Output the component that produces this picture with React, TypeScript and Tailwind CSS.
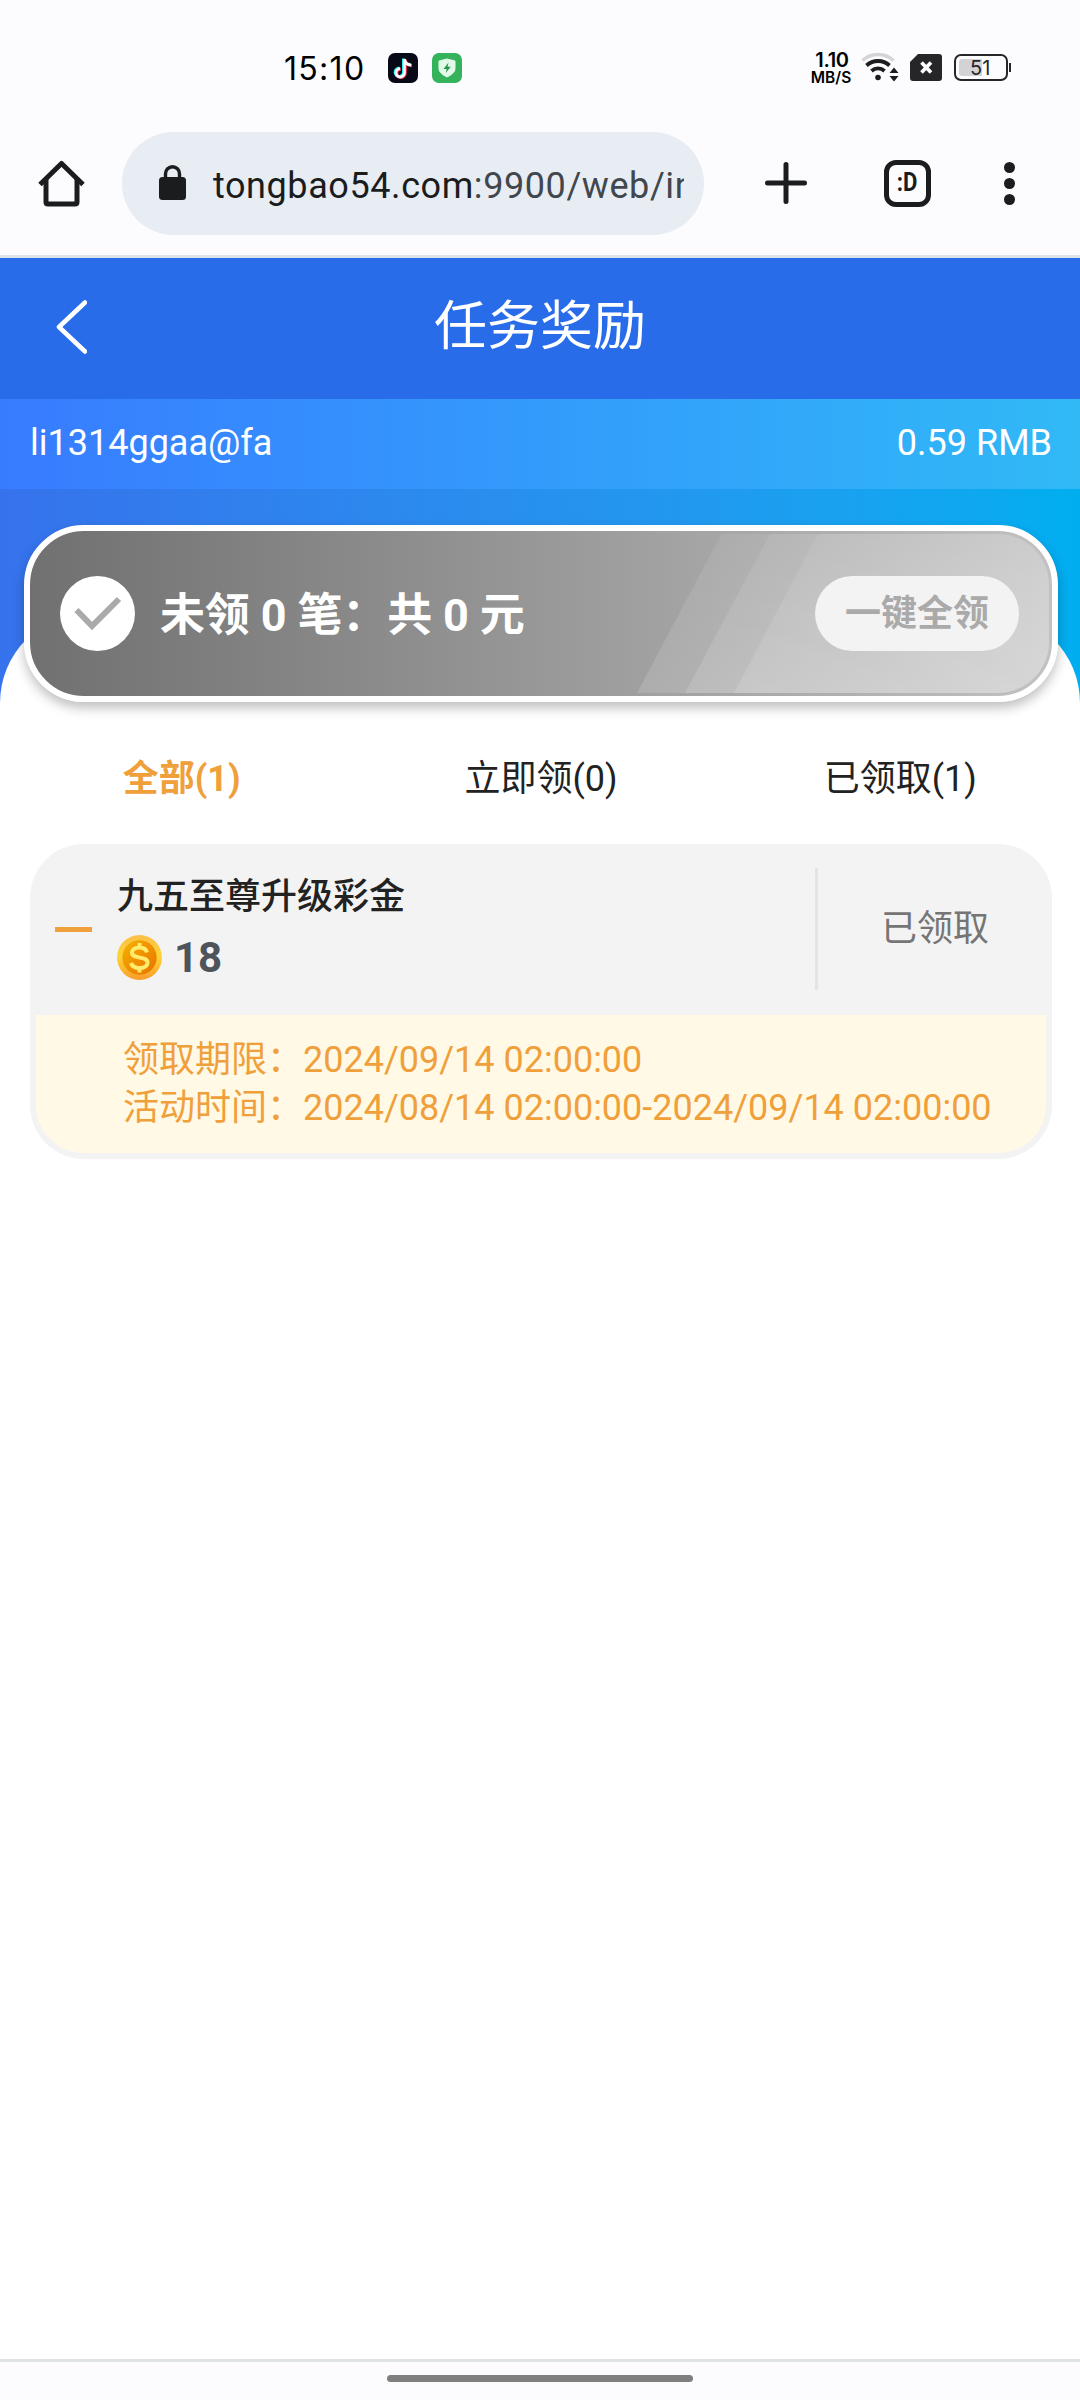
import type { ReactNode } from "react";

const tabs = [
  { label: "全部(1)", active: true },
  { label: "立即领(0)", active: false },
  { label: "已领取(1)", active: false },
];

const StatusBar = () => (
  <div className="flex h-[132px] items-start pt-[52px] pl-[284px] pr-[69px] font-['Inter',sans-serif] text-black">
    <span className="mt-px w-[104px] text-[32px] leading-8 tracking-[1.3px] whitespace-nowrap">15:10</span>
    <svg className="mt-px size-[30px]" viewBox="0 0 30 30">
      <rect width="30" height="30" rx="7" fill="#080916" />
      <g fill="none" strokeWidth="3.2">
        <path d="M15.6 5.5V19.5A4.2 4.2 0 1 1 11.4 15.1M15.6 6C16.2 9.4 18.8 11.4 22.4 11.6" stroke="#25f4ee" />
        <path d="M17.2 6.5V20.3A4.2 4.2 0 1 1 12.8 16.1M17.2 7C17.8 10.4 20.4 12.4 24 12.6" stroke="#fe2c55" />
        <path d="M16.4 6V19.9A4.2 4.2 0 1 1 12.1 15.6M16.4 6.5C17 9.9 19.6 11.9 23.2 12.1" stroke="#fff" strokeWidth="2.8" />
      </g>
    </svg>
    <svg className="mt-px ml-3.5 size-[30px]" viewBox="0 0 30 30">
      <rect width="30" height="30" rx="7" fill="#35b35b" />
      <path d="M15 6 23 8v7.500c0 4-4 6.500-8 8.500-4-2-8-4.500-8-8.500V8Z" fill="#e3faea" stroke="#e3faea" strokeLinejoin="round" />
      <path d="M16.500 9.500 11.500 16h3.200l-.9 4 4.900-6.300h-3.200Z" fill="#24984a" />
    </svg>
    <div className="ml-auto flex w-[40px] flex-col items-center font-semibold">
      <span className="text-[20px] leading-[17px] tracking-[-0.3px]">1.10</span>
      <span className="mt-px -ml-0.5 text-[15.500px] leading-4">MB/S</span>
    </div>
    <svg className="ml-2 h-[30px] w-[40px]" viewBox="0 0 40 30" fill="none" strokeWidth="3.600">
      <path d="M2.500 8.500a23 23 0 0 1 31 0" stroke="#d4d4d6" />
      <path d="M6.500 13.500a17 17 0 0 1 23 0M11.500 19a9.600 9.600 0 0 1 13 0" stroke="#1d1d20" strokeWidth="3.800" />
      <circle cx="18" cy="25.500" r="2.800" fill="#1d1d20" />
      <path d="M29.500 21h9L34 15.500ZM29.500 24h9L34 29.500Z" fill="#1d1d20" />
    </svg>
    <svg className="mt-0.5 ml-2.5 h-[27px] w-8" viewBox="0 0 32 27">
      <path d="M8 0h21a3 3 0 0 1 3 3v21a3 3 0 0 1-3 3H3a3 3 0 0 1-3-3V8Z" fill="#262629" />
      <path d="m11.500 8.500 9.500 10M21 8.500l-9.500 10" stroke="#fff" strokeWidth="3.600" />
    </svg>
    <div className="mt-0.5 ml-3 flex h-[27px] w-[54px] shrink-0 rounded-[7px] border-2 border-[#262629] p-[3px]">
      <div className="relative h-full w-[23px] rounded-l-[3px] bg-[#d3d3d6]">
        <span className="absolute top-0 left-[11px] text-[20px] leading-[18px] text-[#262629]">51</span>
      </div>
    </div>
    <div className="mt-[11px] ml-px h-[9px] w-0.5 shrink-0 bg-[#262629]" />
  </div>
);

const BrowserBar = () => (
  <div className="flex h-[123px] text-[#1a1c1e]">
    <svg className="mt-[28px] ml-[38px] h-[47px] w-[47px]" viewBox="0 0 47 47" fill="none" stroke="currentColor" strokeWidth="5">
      <path d="M2 24.500 23.500 3.500 45 24.500" strokeLinejoin="round" />
      <path d="M8 19v23q0 2 2 2h27q2 0 2-2V19" />
    </svg>
    <div className="ml-[37px] flex h-[103px] w-[582px] rounded-full bg-[#e7edf3] pr-5 pl-[37px]">
      <svg className="mt-[33px] h-[35px] w-[27px]" viewBox="0 0 27 35">
        <path d="M6.500 13V8.700a7 7 0 0 1 14 0V13" fill="none" stroke="currentColor" strokeWidth="3.400" />
        <rect y="12" width="27" height="23" rx="3.500" fill="currentColor" />
      </svg>
      <div className="ml-[27px] w-[471px] overflow-hidden pt-[29px] text-[36px] leading-[50px] tracking-[0.580px] whitespace-nowrap">
        tongbao54.com<span className="text-[#42474d]">:9900/web/in</span>
      </div>
    </div>
    <svg className="mt-[30px] ml-[61px] size-[42px]" viewBox="0 0 42 42" stroke="currentColor" strokeWidth="5" strokeLinecap="round">
      <path d="M21 2.500v37M2.500 21h37" />
    </svg>
    <div className="mt-[28px] ml-[77px] flex h-[47px] w-[47px] justify-center rounded-[12px] border-[5px] border-current">
      <span className="scale-x-85 text-[26px] leading-[35px] font-bold">:D</span>
    </div>
    <div className="mt-[30px] ml-[73px] flex h-[43px] w-[11px] flex-col justify-between">
      <i className="size-[11px] rounded-full bg-current" />
      <i className="size-[11px] rounded-full bg-current" />
      <i className="size-[11px] rounded-full bg-current" />
    </div>
  </div>
);

const Coin = () => (
  <svg className="size-[45px]" viewBox="0 0 45 45">
    <defs>
      <linearGradient id="rim" x1="0" y1="0" x2="0" y2="1">
        <stop offset="0" stopColor="#fbc04a" />
        <stop offset=".5" stopColor="#fdd435" />
        <stop offset="1" stopColor="#fb9a2c" />
      </linearGradient>
      <linearGradient id="face" x1="0" y1="0" x2="1" y2="1">
        <stop offset="0" stopColor="#f5b400" />
        <stop offset=".5" stopColor="#f09000" />
        <stop offset="1" stopColor="#e87400" />
      </linearGradient>
    </defs>
    <circle cx="22.500" cy="22.500" r="22.500" fill="url(#rim)" />
    <circle cx="22.500" cy="22.500" r="17.200" fill="url(#face)" />
    <path d="M30 17.500c-1-3.500-4-5-7.500-5-4.200 0-7.500 2-7.500 5.300 0 6.700 15.500 3 15.500 9.700 0 3.300-3.300 5.500-8 5.500-4.500 0-7.500-2-8.500-5M22.500 8v4M22.500 33v4.500" fill="none" stroke="#ffec6e" strokeWidth="4" />
  </svg>
);

const Summary = () => (
  <div className="relative flex h-[177px] items-center overflow-hidden rounded-[60px] border-[6px] border-white bg-linear-to-r from-[#707070] to-[#c2c2c2] bg-origin-border pr-[33px] pl-[30px] text-white">
    {/* glossy slanted stripes on the right side */}
    <svg className="absolute inset-0 size-full" viewBox="0 0 1022 165">
      <defs>
        <linearGradient id="gloss" x1="0" y1="0" x2="0" y2="1">
          <stop offset="0" stopColor="#fff" stopOpacity=".07" />
          <stop offset="1" stopColor="#fff" stopOpacity=".14" />
        </linearGradient>
      </defs>
      <path d="M691.500 3H968a51 51 0 0 1 51 51V111a51 51 0 0 1-51 51H607Z" fill="url(#gloss)" />
      <path d="M740 3H968a51 51 0 0 1 51 51V111a51 51 0 0 1-51 51H655Z" fill="url(#gloss)" />
      <path d="M788 3H968a51 51 0 0 1 51 51V111a51 51 0 0 1-51 51H704Z" fill="url(#gloss)" />
    </svg>
    <svg className="relative size-[75px]" viewBox="0 0 75 75">
      <circle cx="37.500" cy="37.500" r="37.500" fill="#fff" />
      <path d="m16.500 34 15.500 16 27-27" fill="none" stroke="#aaa" strokeWidth="6" />
    </svg>
    <p className="relative top-0.5 ml-[25px] text-[45px] leading-[60px] font-bold tracking-[-0.15px] whitespace-nowrap">未领 0 笔：共 0 元</p>
    <button className="relative ml-auto h-[75px] w-[204px] rounded-full bg-[#f3f3f3] text-[36px] font-bold text-[#aaa]">一键全领</button>
  </div>
);

const Detail = ({ children }: { children: ReactNode }) => (
  <p className="h-12 text-[36px] leading-12 whitespace-nowrap">{children}</p>
);

const TaskCard = () => (
  <div className="mr-[28px] ml-[30px] h-[315px] rounded-[54px] bg-[#f3f3f3] p-[6px]">
    <div className="flex h-[165px]">
      <div className="mt-[77px] ml-[19px] h-[5px] w-[37px] bg-[#f0a03a]" />
      <div className="ml-[25px] w-[698px] pt-5">
        <h2 className="h-[54px] text-[36px] leading-[54px] font-medium text-[#222]">九五至尊升级彩金</h2>
        <div className="mt-[11px] flex items-center">
          <Coin />
          <span className="ml-3 text-[42px] leading-[43px] font-bold text-[#4f535c]">18</span>
        </div>
      </div>
      <div className="mt-[18px] h-[122px] w-[3px] bg-[#e4e4e4]" />
      <div className="flex-1 pt-[52px] pl-[6px] text-center text-[36px] leading-[54px] text-[#757575]">已领取</div>
    </div>
    <div className="h-[138px] rounded-b-[48px] bg-[#fff9e6] pt-[21px] pl-[87px] text-[#f0a03a]">
      <Detail>领取期限：2024/09/14 02:00:00</Detail>
      <Detail>活动时间：2024/08/14 02:00:00-2024/09/14 02:00:00</Detail>
    </div>
  </div>
);

const App = () => {
  return (
    <div className="flex h-[2400px] w-[1080px] flex-col overflow-hidden bg-[#fcfcfe] font-['Roboto','Noto_Sans_CJK_SC',sans-serif]">
      <StatusBar />
      <BrowserBar />
      <header className="flex h-[144px] items-center border-t-[3px] border-[#dde3ea] bg-[#286cea] text-white">
        <svg className="mt-[-3px] ml-[56px] h-[54px] w-[31px]" viewBox="0 0 31 54" fill="none" stroke="currentColor" strokeWidth="4.500" strokeLinecap="round" strokeLinejoin="round">
          <path d="M29 2.500 3 27l26 24.500" />
        </svg>
        <h1 className="mt-[-3px] mr-[87px] flex-1 text-center text-[53px] leading-[80px]">任务奖励</h1>
      </header>
      <div className="flex h-[90px] items-center justify-between bg-linear-to-r from-[#387bff] to-[#31b9f6] pr-[28px] pb-0.5 pl-[30px] text-[36px] text-white">
        <span>li1314ggaa@fa</span>
        <span>0.59 RMB</span>
      </div>
      <main className="flex-1 bg-linear-to-r from-[#3672ec] to-[#00aef0] bg-[length:100%_300px] bg-no-repeat pt-[124px]">
        <div className="h-full rounded-t-[90px] bg-white">
          <div className="relative -top-[88px] mr-[22px] ml-[24px] rounded-[60px] shadow-[0_6px_12px_rgba(0,0,0,0.25)]">
            <Summary />
          </div>
          <nav className="-mt-[44px] grid h-[98px] grid-cols-3 pl-0.5">
            {tabs.map((tab) => (
              <button
                key={tab.label}
                className={`h-[66px] text-[36px] leading-[66px] ${tab.active ? "font-bold text-[#f0a03a]" : "text-[#222]"}`}
              >
                {tab.label}
              </button>
            ))}
          </nav>
          <TaskCard />
        </div>
      </main>
      <footer className="flex h-[41px] justify-center border-t-[3px] border-[#dfe3e6] bg-[#fcfcff] pt-[13px]">
        <div className="h-[7px] w-[306px] rounded-full bg-[#7f7f7f]" />
      </footer>
    </div>
  );
};

export default App;
